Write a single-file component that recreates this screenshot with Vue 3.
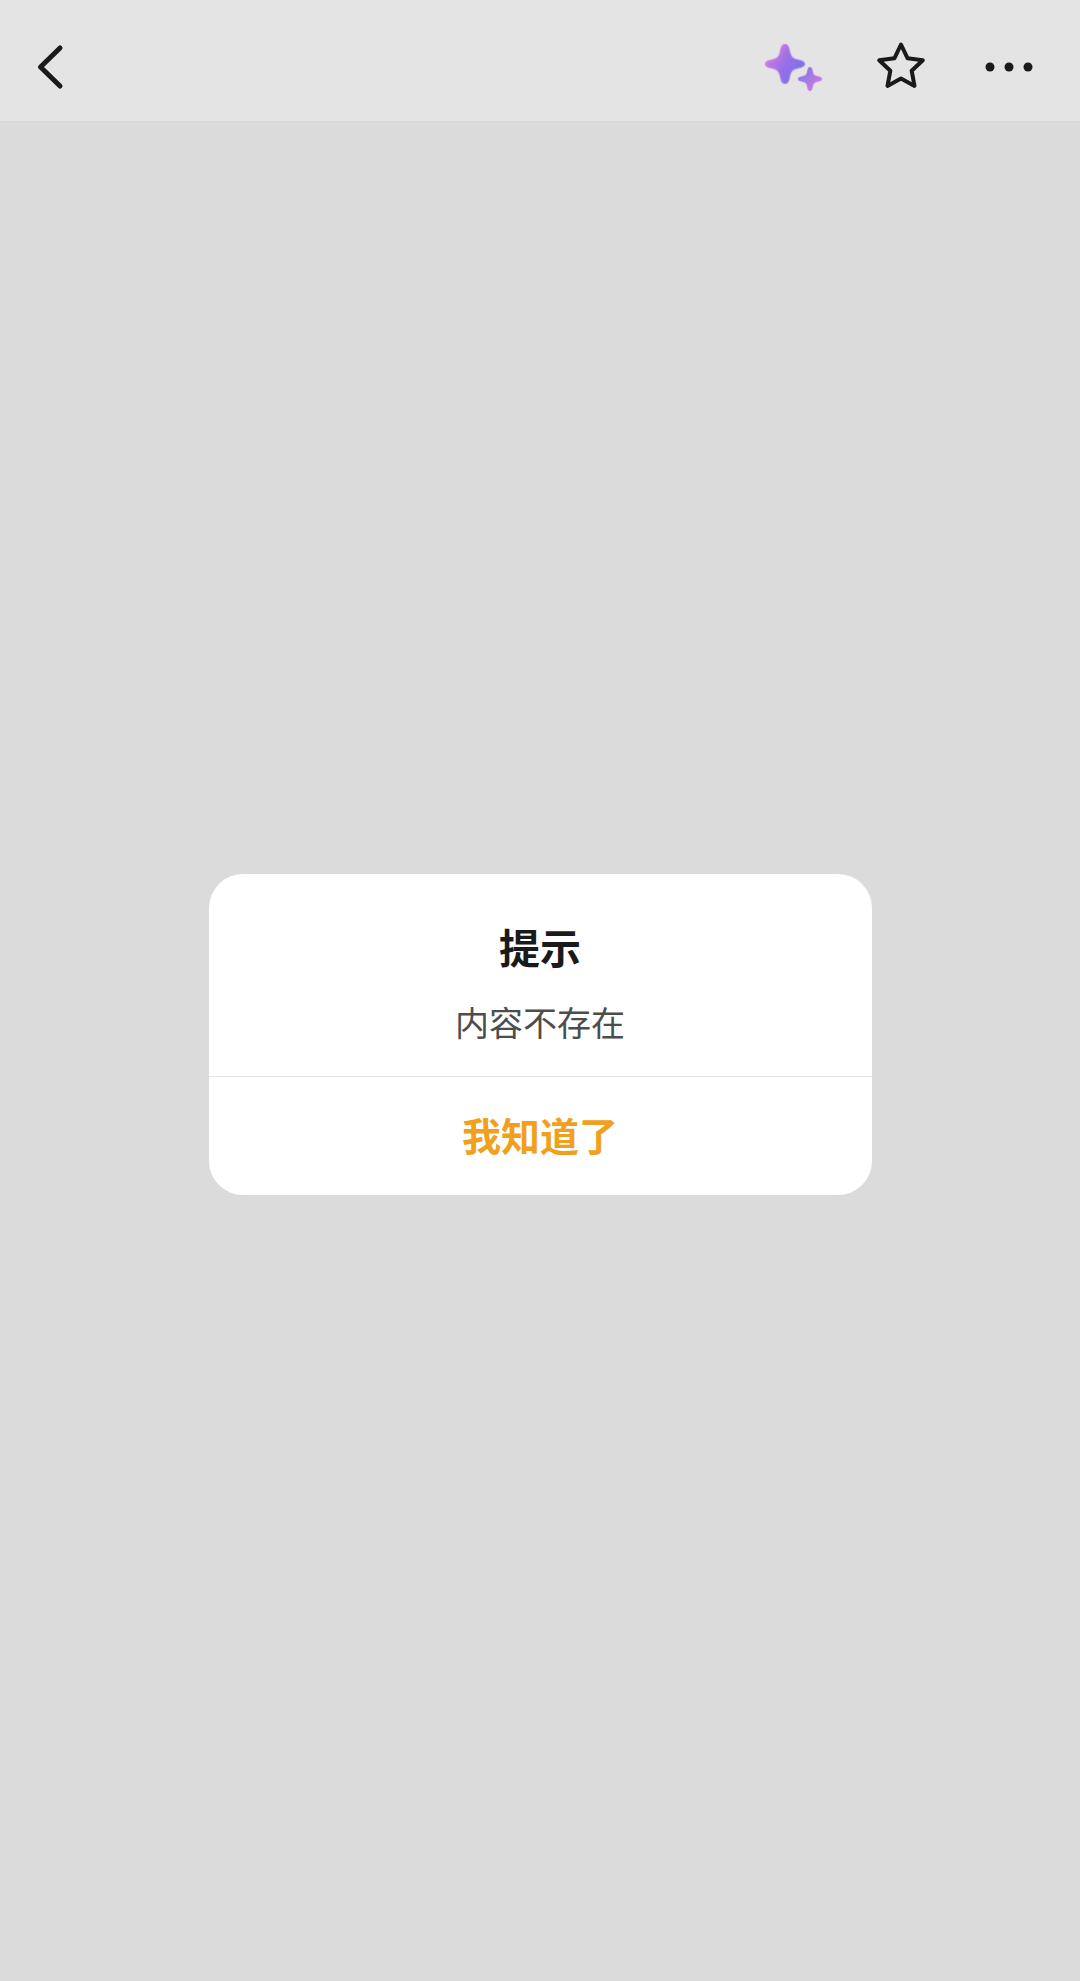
<template>
  <div class="page">
    <header class="topBar">
      <button class="iconBtn" type="button" aria-label="返回">
        <svg width="32" height="48" viewBox="0 0 32 48">
          <path d="M27 5 L7.5 24 L27 43" fill="none" stroke="#1a1a1a" stroke-width="5" stroke-linecap="round" stroke-linejoin="round" />
        </svg>
      </button>
      <div class="actions">
        <button class="iconBtn sparkBtn" type="button" aria-label="AI">
          <svg width="66" height="54" viewBox="0 0 66 54">
            <defs>
              <linearGradient id="sparkBig" x1="0" y1="0.2" x2="1" y2="0.8">
                <stop offset="0" stop-color="#d77fe0" />
                <stop offset="0.5" stop-color="#9a6fe6" />
                <stop offset="1" stop-color="#6878ea" />
              </linearGradient>
              <linearGradient id="sparkSmall" x1="0" y1="0" x2="1" y2="1">
                <stop offset="0" stop-color="#6f78e4" />
                <stop offset="1" stop-color="#e07de0" />
              </linearGradient>
            </defs>
            <!-- two four-point sparkles with soft rounded tips -->
            <path d="M24 3 C27.5 3 28.5 7 29 10 C30 15.5 32 17.5 37 18.5 C40.5 19.2 44 20 44 23 C44 26 40.5 26.8 37 27.5 C32 28.5 30 30.5 29 36 C28.5 39 27.5 43 24 43 C20.5 43 19.5 39 19 36 C18 30.5 16 28.5 11 27.5 C7.5 26.8 4 26 4 23 C4 20 7.5 19.2 11 18.5 C16 17.5 18 15.5 19 10 C19.5 7 20.5 3 24 3 Z" fill="url(#sparkBig)" stroke="#e2a8ee" stroke-opacity="0.35" stroke-width="2" />
            <path d="M49 26 C51 26 51.6 28.5 52 31 C52.5 33.4 53.4 34.4 56 35 C58.5 35.5 61 36 61 38 C61 40 58.5 40.5 56 41 C53.4 41.6 52.5 42.6 52 45 C51.6 47.5 51 50 49 50 C47 50 46.4 47.5 46 45 C45.5 42.6 44.6 41.6 42 41 C39.5 40.5 37 40 37 38 C37 36 39.5 35.5 42 35 C44.6 34.4 45.5 33.4 46 31 C46.4 28.5 47 26 49 26 Z" fill="url(#sparkSmall)" stroke="#e2a8ee" stroke-opacity="0.35" stroke-width="1.5" />
          </svg>
        </button>
        <button class="iconBtn starBtn" type="button" aria-label="收藏">
          <svg width="52" height="50" viewBox="0 0 52 50">
            <path d="M26 3.5 L32.6 17.3 L47.8 19.3 L36.7 29.8 L39.5 44.9 L26 37.6 L12.5 44.9 L15.3 29.8 L4.2 19.3 L19.4 17.3 Z" fill="none" stroke="#1a1a1a" stroke-width="4" stroke-linejoin="round" />
          </svg>
        </button>
        <button class="iconBtn" type="button" aria-label="更多">
          <svg width="48" height="10" viewBox="0 0 48 10">
            <circle cx="5" cy="5" r="4.5" fill="#1a1a1a" />
            <circle cx="24" cy="5" r="4.5" fill="#1a1a1a" />
            <circle cx="43" cy="5" r="4.5" fill="#1a1a1a" />
          </svg>
        </button>
      </div>
    </header>

    <main class="content">
      <div class="dialog">
        <div class="dialogBody">
          <h2 class="dialogTitle">提示</h2>
          <p class="dialogText">内容不存在</p>
        </div>
        <button class="dialogBtn" type="button">我知道了</button>
      </div>
    </main>
  </div>
</template>

<script setup>
</script>

<style>
  html,
  body {
    margin: 0;
    background-color: #dbdbdb;
  }
</style>

<style scoped>
  .page {
    min-height: 1981px;
    display: flex;
    flex-direction: column;
    background-color: #dbdbdb;
    font-family: "Noto Sans CJK SC", "Liberation Sans", sans-serif;
  }

  .topBar {
    box-sizing: border-box;
    height: 122px;
    display: flex;
    align-items: center;
    justify-content: space-between;
    padding: 12px 47px 0 33px;
    background-color: #e4e4e4;
    border-bottom: 1px solid #d6d6d6;
  }

  .actions {
    display: flex;
    align-items: center;
    gap: 58px;
  }

  .iconBtn {
    display: flex;
    padding: 0;
    background: none;
    border: none;
  }

  .sparkBtn {
    margin-top: 2px;
    margin-right: -10px;
  }

  .starBtn {
    margin-top: -2px;
  }

  .content {
    display: flex;
    justify-content: center;
    padding-top: 752px;
  }

  .dialog {
    width: 663px;
    height: 321px;
    display: flex;
    flex-direction: column;
    overflow: hidden;
    background-color: #ffffff;
    border-radius: 34px;
  }

  .dialogBody {
    box-sizing: border-box;
    height: 203px;
    padding-top: 47px;
    text-align: center;
    border-bottom: 1px solid #e4e4e4;
  }

  .dialogTitle {
    margin: 0;
    font-size: 41px;
    line-height: 50px;
    font-weight: 700;
    color: #1a1a1a;
  }

  .dialogText {
    margin: 29px 0 0;
    font-size: 34px;
    line-height: 44px;
    color: #4d4d4d;
  }

  .dialogBtn {
    flex: 1;
    padding: 0 0 5px;
    font-family: inherit;
    font-size: 39px;
    font-weight: 700;
    color: #f0a01c;
    background: none;
    border: none;
  }
</style>
